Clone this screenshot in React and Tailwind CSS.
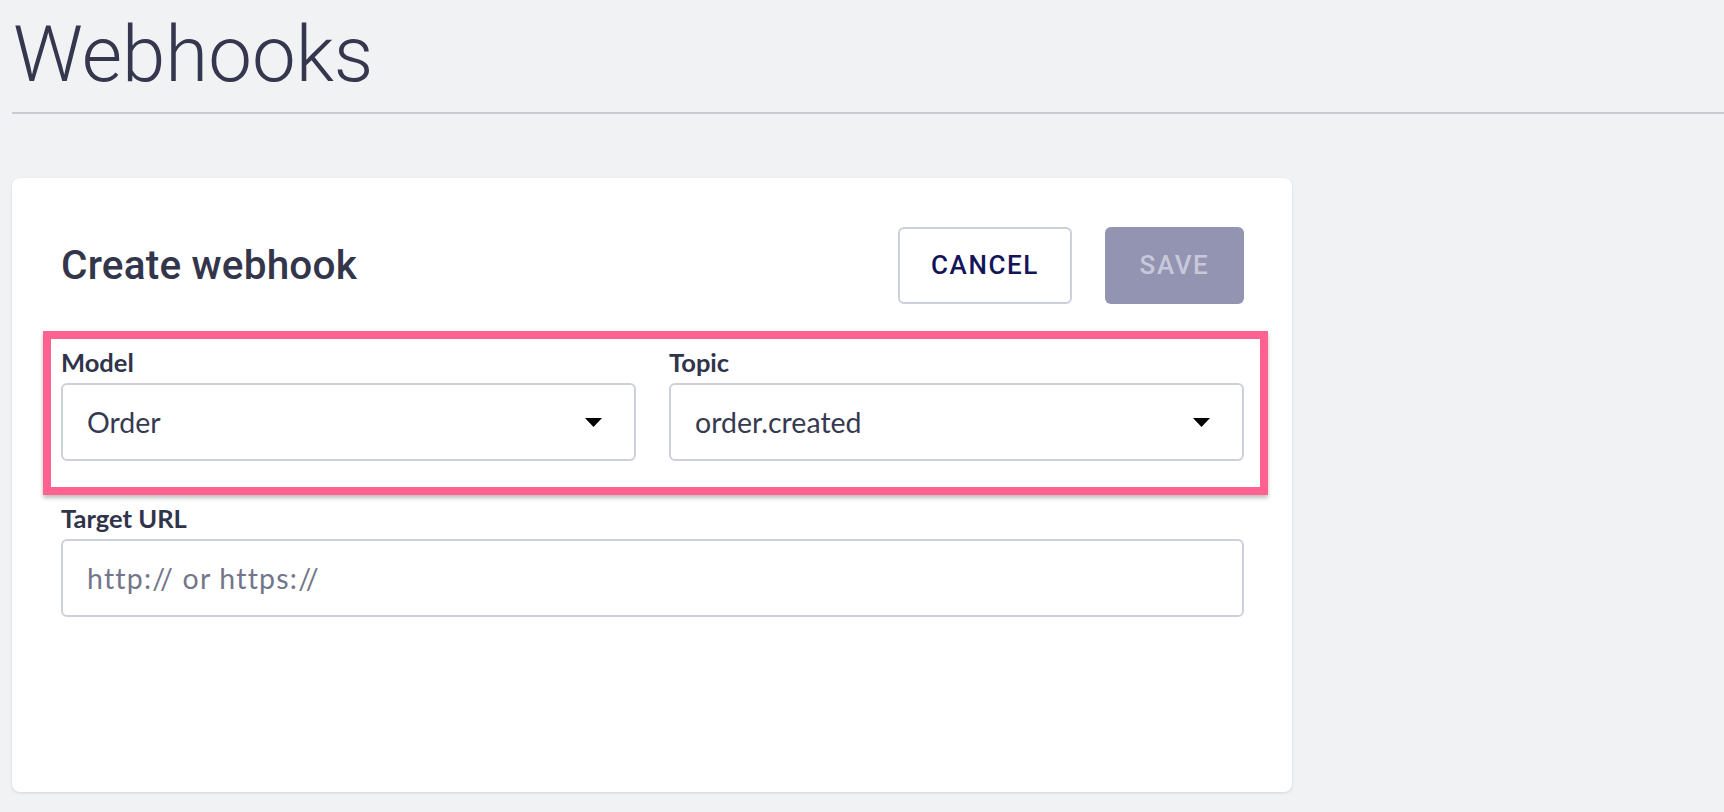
import React from "react";

const labelClass = "block text-[25.5px] font-bold leading-[30px] text-[#30344a] mb-[6px]";

const boxClass =
  "flex h-[78px] w-full items-center rounded-md border-2 border-[#cdcfdb] bg-white pl-6 pr-8 text-[28.5px] text-[#363a50]";

function Caret() {
  return (
    <svg width="17" height="9" viewBox="0 0 17 9" className="shrink-0">
      <path d="M0 0H17L8.5 9Z" fill="#000" />
    </svg>
  );
}

function SelectField({ label, value }) {
  return (
    <div className="flex-1">
      <label className={labelClass}>{label}</label>
      <div className={boxClass}>
        <span className="flex-1">{value}</span>
        <Caret />
      </div>
    </div>
  );
}

export default function App() {
  return (
    <div
      className="min-h-screen bg-[#f1f2f4] pb-5"
      style={{ fontFamily: "Lato, 'Noto Sans', sans-serif" }}
    >
      <header className="pl-3 pt-4">
        <h1 className="pl-[1px] font-['Roboto',sans-serif] text-[78px] font-light leading-none text-[#34374d]">
          Webhooks
        </h1>
        <div className="mt-[18px] h-[2px] bg-[#c9cad4]" />
      </header>

      <section className="ml-3 mt-[64px] h-[614px] w-[1280px] rounded-lg bg-white pl-[49px] pr-12 pt-[49px] shadow-[0_1px_3px_rgba(0,0,0,0.12)]">
        <div className="flex h-[77px] items-center">
          <h2 className="flex-1 font-['Roboto',sans-serif] text-[40.5px] font-medium tracking-[0.2px] text-[#33364b]">
            Create webhook
          </h2>
          <div className="flex gap-[33px]">
            <button
              type="button"
              className="h-[77px] w-[174px] rounded-md border-2 border-[#cdcfdb] bg-white font-['Roboto',sans-serif] text-[26px] font-medium tracking-[1.6px] text-[#14145a]"
            >
              CANCEL
            </button>
            <button
              type="button"
              disabled
              className="h-[77px] w-[139px] rounded-md bg-[#9394b1] font-['Roboto',sans-serif] text-[26px] font-medium tracking-[1.6px] text-[#c7c8da]"
            >
              SAVE
            </button>
          </div>
        </div>

        <div className="relative mt-[43px] flex gap-[33px]">
          <SelectField label="Model" value="Order" />
          <SelectField label="Topic" value="order.created" />
          <div className="pointer-events-none absolute -left-[18px] -right-[24px] -top-[16px] -bottom-[34px] border-[8px] border-[#ff6190] shadow-[0_3px_4px_rgba(0,0,0,0.25)]" />
        </div>

        <div className="mt-[42px]">
          <label className={labelClass}>Target URL</label>
          <input
            type="text"
            placeholder="http:// or https://"
            className="h-[78px] w-full rounded-md border-2 border-[#cdcfdb] bg-white pl-6 text-[28.5px] text-[#363a50] outline-none placeholder:tracking-[1.2px] placeholder:text-[#73768a]"
          />
        </div>
      </section>
    </div>
  );
}
